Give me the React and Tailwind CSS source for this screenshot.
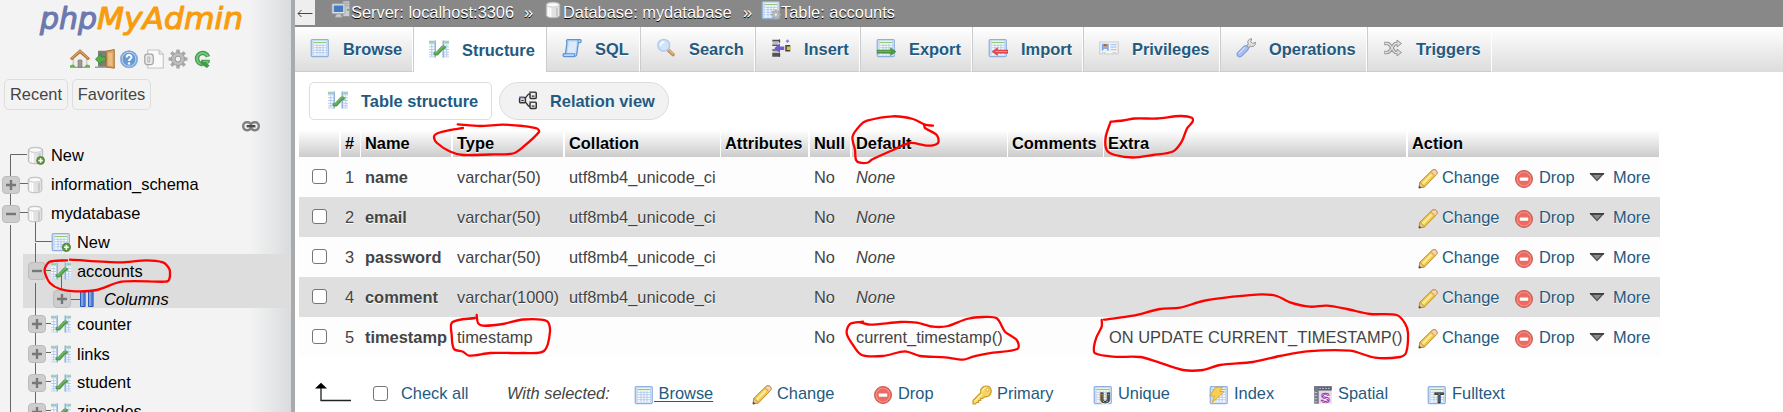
import React from "react";

/* ---------- icons (16-unit grid, drawn at 20px) ---------- */
function Svg({ children, size = 20, className = "" }) {
  return (
    <svg width={size} height={size} viewBox="0 0 16 16" className={"block shrink-0 " + className} fill="none">
      {children}
    </svg>
  );
}

const sheet = (
  <>
    <rect x="1" y="1.2" width="13.6" height="13.6" rx="0.8" fill="#e9f1fb" stroke="#8fb0dc" strokeWidth="1" />
    <rect x="1.8" y="2" width="12" height="12" fill="#bfd5f0" />
    <rect x="3" y="2.4" width="9.8" height="11" fill="#fff" />
    <path d="M3 3.6h9.8" stroke="#8ccb74" strokeWidth="1.1" />
    <path d="M3 5.8h9.8M3 7.8h9.8M3 9.8h9.8M3 11.8h9.8M5.6 5v8.4M8 5v8.4M10.4 5v8.4" stroke="#a9c4e8" strokeWidth="0.7" />
  </>
);

const plusBadge = (
  <>
    <circle cx="12.3" cy="12.2" r="3.3" fill="#5d9a42" stroke="#477d30" strokeWidth="0.7" />
    <path d="M12.3 10.3v3.8M10.4 12.2h3.8" stroke="#fff" strokeWidth="1.3" />
  </>
);

const cylinder = (
  <>
    <path d="M2 3.4c0-1.4 2.6-2.3 6-2.3s6 .9 6 2.3v9.2c0 1.4-2.6 2.3-6 2.3s-6-.9-6-2.3z" fill="#e2e2e2" stroke="#b5b5b5" strokeWidth="0.8" />
    <path d="M4 5.5v8M5.8 6v8.2" stroke="#fff" strokeWidth="1.4" />
    <path d="M11.5 6v7.8" stroke="#c9c9c9" strokeWidth="1.8" />
    <ellipse cx="8" cy="3.4" rx="5.4" ry="1.9" fill="#fafafa" stroke="#c4c4c4" strokeWidth="0.6" />
  </>
);

const BrowseIcon = (p) => <Svg {...p}>{sheet}</Svg>;
const NewTableIcon = (p) => <Svg {...p}>{sheet}{plusBadge}</Svg>;
const DbIcon = (p) => <Svg {...p}>{cylinder}</Svg>;
const NewDbIcon = (p) => <Svg {...p}>{cylinder}{plusBadge}</Svg>;

const StructureIcon = (p) => (
  <Svg {...p}>
    <path d="M0 1.2h5.6v13.6H0z" fill="#c4daf3" />
    <path d="M10.8 1.2H16v13.6h-5.2z" fill="#c4daf3" />
    <path d="M0 2.4h4M12.4 2.4H16" stroke="#8ccb74" strokeWidth="1" />
    <path d="M0 4.4h4.2v9.4H0zM12.4 4.4H16v9.4h-3.6z" fill="#fff" />
    <path d="M0 6.2h4.2M0 8.4h4.2M0 10.6h4.2M0 12.6h4.2M12.4 6.2H16M12.4 8.4H16M12.4 10.6H16M12.4 12.6H16M2.2 4.4v9.4M14.2 4.4v9.4" stroke="#abc6e8" strokeWidth="0.7" />
    <path d="M5 1.2v13.600M11.400 1.2v13.600" stroke="#8fb0dc" strokeWidth="1" />
    <path d="M5 11.600h1.500l4.600-5h1" stroke="#4f9c48" strokeWidth="3" strokeLinecap="round" strokeLinejoin="round" />
    <path d="M5 11.200h1.300l4.600-5h1" stroke="#6fb566" strokeWidth="1.100" strokeLinecap="round" />
  </Svg>
);

const SqlIcon = (p) => (
  <Svg {...p}>
    <path d="M4.5 1.2h10c1 0 1.200 2.200 0 2.400h-1.400L11.800 13c-.2 1.200-1 1.800-2 1.800H1.800c-1.200 0-1.200-2.400 0-2.400h1L4 3.400c-.7-.7-.5-2.200.5-2.200z" fill="#bcd8f7" stroke="#5b93d6" strokeWidth="1" />
    <path d="M5.600 2.800h6.200l-1.200 9H4.500z" fill="#dcebfb" />
    <path d="M2 12.600h8.200l-.5 1.800" stroke="#5b93d6" strokeWidth="0.800" />
    <path d="M13 3.600c-.5-.8-.3-2 .6-2.200" stroke="#5b93d6" strokeWidth="0.800" />
  </Svg>
);

const SearchIcon = (p) => (
  <Svg {...p}>
    <path d="M9.600 9.400l4 3.800" stroke="#c08f5c" strokeWidth="3" strokeLinecap="round" />
    <path d="M9.800 9l3.800 3.600" stroke="#e6bd88" strokeWidth="1" strokeLinecap="round" />
    <circle cx="6.200" cy="5.800" r="4.700" fill="#cfe3fa" stroke="#b0c9ea" strokeWidth="1.100" />
    <path d="M3.600 6c.2-1.800 1.300-2.700 3-2.800" stroke="#fff" strokeWidth="1.300" />
  </Svg>
);

const InsertIcon = (p) => (
  <Svg {...p}>
    <path d="M1 1.400h6v1.400H1zM1 5.200h5v1.200H1zM1 9h5v1.200H1zM1 12h6v3H1z" fill="#555" />
    <path d="M1.200 3.200h4.600v1.600H1.200zM1.200 10.600h4.600V12H1.200z" fill="#bbb" />
    <path d="M6.800 1.200v2.600M6.800 12.200V15" stroke="#444" strokeWidth="1" />
    <path d="M2.600 8.200l4.600-4v2.600h3.400v2.800H7.200v2.600z" fill="#6a5fd0" />
    <path d="M11.400 5.600h4v5.200h-4z" fill="#444" />
    <path d="M12.600 6.800h2.800v2.800h-2.800z" fill="#f2bd1d" />
    <path d="M13.200 1l1.500 1.500-1.500 1.500-1.500-1.500z" fill="#8a7fe0" />
  </Svg>
);

const ExportIcon = (p) => (
  <Svg {...p}>
    {sheet}
    <path d="M1 9.600h10.600V7.800l4.400 3.100-4.400 3.100v-1.800H1z" fill="#4f9a3c" stroke="#3d7f2e" strokeWidth="0.400" />
    <path d="M1.600 10.600H12" stroke="#86c373" strokeWidth="0.600" />
  </Svg>
);

const ImportIcon = (p) => (
  <Svg {...p}>
    {sheet}
    <path d="M16 9.600H7.600V7.800l-4.400 3.100 4.400 3.100v-1.800H16z" fill="#e8484a" stroke="#d03537" strokeWidth="0.400" />
    <path d="M15.400 10.800H6" stroke="#f79a9b" strokeWidth="0.700" />
  </Svg>
);

const PrivilegesIcon = (p) => (
  <Svg {...p}>
    <path d="M.6 3.200h14.800v9.600h-2.200v-1h-1.800v1H4.600v-1H2.800v1H.6z" fill="#f4f4f4" stroke="#cbcbcb" strokeWidth="0.900" />
    <rect x="2.200" y="4.600" width="5.600" height="5.600" fill="#7aaef0" />
    <circle cx="5" cy="6.700" r="1.500" fill="#d8a070" />
    <path d="M3.200 10.200c.2-2 3.400-2 3.600 0z" fill="#fff" />
    <path d="M3.500 6.200c.2-1.600 2.800-1.600 3 0z" fill="#8a5a30" />
    <path d="M9.200 5.200h4.800M9.200 7.200h4.800M9.200 9.200h4.800" stroke="#a9c9f0" strokeWidth="1" />
  </Svg>
);

const WrenchIcon = (p) => (
  <Svg {...p}>
    <path d="M8 8.400l3.400-3.400" stroke="#a2a2a2" strokeWidth="3.200" />
    <path d="M9.400 4.200c-.3-2 .9-3.600 3.200-3.600L11.800 3l1.600 1.400 2.200-1c.3 2.300-1.400 3.700-3.400 3.400z" fill="#e3e3e3" stroke="#979797" strokeWidth="0.800" />
    <path d="M8.600 7.800L11.800 4.600" stroke="#dedede" strokeWidth="1.600" />
    <path d="M3 13l4.800-4.800" stroke="#7899dc" strokeWidth="5" strokeLinecap="round" />
    <path d="M3 13l4.800-4.800" stroke="#a6bff2" strokeWidth="3.600" strokeLinecap="round" />
    <path d="M2.600 12l4.200-4.200" stroke="#cddcfb" strokeWidth="1" strokeLinecap="round" />
  </Svg>
);

const TriggersIcon = (p) => (
  <Svg {...p}>
    <path d="M1 4.400h2.600c3 0 4 7.200 7 7.200h1.600M1 11.600h2.600c3 0 4-7.200 7-7.200h1.600" stroke="#989898" strokeWidth="2.900" />
    <path d="M11.200 1.600l3.600 2.800-3.600 2.800zM11.200 8.800l3.600 2.800-3.600 2.800z" fill="#d8d8d8" stroke="#989898" strokeWidth="0.800" />
    <path d="M1.600 4.400h2c3 0 4 7.200 7 7.200h2M1.600 11.600h2c3 0 4-7.200 7-7.200h2" stroke="#dedede" strokeWidth="1.100" />
  </Svg>
);

const RelationIcon = (p) => (
  <Svg {...p}>
    <path d="M5 7.400l3.400-4.200h2M5 8.400l3.400 4.400h2" stroke="#333" strokeWidth="1" />
    <rect x="1.300" y="6" width="4.600" height="4.200" rx="0.800" fill="#eee" stroke="#333" strokeWidth="1.200" />
    <path d="M2.600 8.400h2" stroke="#333" />
    <rect x="9.600" y="1.800" width="5" height="5" rx="0.800" fill="#eee" stroke="#333" strokeWidth="1.200" />
    <rect x="9.600" y="9.800" width="5" height="5" rx="0.800" fill="#eee" stroke="#333" strokeWidth="1.200" />
    <path d="M11 4.800h2.200M11 12.800h2.200" stroke="#333" />
    <path d="M8.800 1.300h5M8.800 9.200h5M.8 5.400h4" stroke="#9a93d0" strokeWidth="1" />
  </Svg>
);

const PencilIcon = (p) => (
  <Svg {...p}>
    <path d="M.8 15.200l.7-4.600L11.200 1.100c1-.9 2.500-.8 3.400.1.9.9 1 2.300.1 3.300L5.200 14.300z" fill="#f0c84a" stroke="#bd8a34" strokeWidth="0.800" />
    <path d="M3.800 11.800L11 4.400" stroke="#fceb94" strokeWidth="2" />
    <path d="M10.400 2.100l1-.9c1-.8 2.300-.7 3.100.1.900.9 1 2.100.2 3.100l-1 1z" fill="#f5d5b4" stroke="#cb9458" strokeWidth="0.700" />
    <path d="M.8 15.200l.7-4.600 3.700 3.700z" fill="#e6c894" stroke="#b08340" strokeWidth="0.500" />
    <path d="M.6 15.400l.4-2.300 1.900 1.900z" fill="#6b4a22" />
  </Svg>
);

const DropIcon = (p) => (
  <Svg {...p}>
    <circle cx="8" cy="8" r="6.800" fill="#e2564e" stroke="#cf5f58" strokeWidth="0.800" />
    <circle cx="8" cy="8" r="5.600" fill="#ec6a5f" stroke="#f2968d" strokeWidth="0.900" />
    <rect x="4.600" y="6.800" width="6.800" height="2.500" rx="0.500" fill="#fff" />
  </Svg>
);

const KeyIcon = (p) => (
  <Svg {...p}>
    <path d="M.8 15.200v-2.800l6-6C6.200 3.600 8.400.8 11.200.8c2.600 0 4.200 1.800 4.200 4.200 0 2.800-2.500 5-5.400 4.400l-1.400 1.400H7v1.600H5.300v1.600H3.800l-1 1.200z" fill="#f6d55c" stroke="#c9962c" strokeWidth="0.900" />
    <path d="M2 13.200l6-6M8.600 5c.2-1.600 1.400-2.600 3-2.700" stroke="#fdf1ae" strokeWidth="1" />
    <circle cx="12.300" cy="3.900" r="1.200" fill="#fff" stroke="#c9962c" strokeWidth="0.600" />
  </Svg>
);

const LetterSheet = ({ letter }) => (
  <Svg>
    {sheet}
    <text x="9.800" y="14.400" textAnchor="middle" fontFamily="Liberation Sans, sans-serif" fontWeight="bold" fontSize="11.500" fill="#1c1c1c" stroke="#1c1c1c" strokeWidth="0.700">
      {letter}
    </text>
  </Svg>
);

const IndexIcon = (p) => (
  <Svg {...p}>
    {sheet}
    <path d="M5.200 1.800h5.600L8.800 5.200h3.400L2.600 14l1.800-5.200H.6z" fill="#f7cf52" stroke="#d9a22c" strokeWidth="0.700" />
  </Svg>
);

const SpatialIcon = (p) => (
  <Svg {...p}>
    <rect x="1" y="1" width="14" height="14" fill="#dcdce4" />
    <path d="M1 1h14v3.400H1z" fill="#5a5a70" />
    <path d="M1 1h3.600v14H1z" fill="#77778a" />
    <path d="M1.600 6h2.400M1.600 8.500h2.400M1.600 11h2.400M1.600 13.400h2.400M5 2.700h9" stroke="#c9c9d8" strokeWidth="0.800" strokeDasharray="1.500 .8" />
    <text x="9.900" y="14" textAnchor="middle" fontFamily="Liberation Sans, sans-serif" fontWeight="bold" fontSize="11" fill="#a01fa8" stroke="#a01fa8" strokeWidth="0.500">S</text>
  </Svg>
);

const MoreIcon = () => (
  <Svg>
    <path d="M3.200 5.600h9.600L8 10.800z" fill="#8a8a8a" stroke="#555" strokeWidth="1.100" />
    <path d="M2.400 5.500h11.200" stroke="#333" strokeWidth="1.100" />
  </Svg>
);

const HomeIcon = () => (
  <Svg>
    <path d="M0 13.200h16V15H0z" fill="#5da74a" />
    <path d="M2.600 7.600L8 3l5.400 4.600v6.800H2.600z" fill="#f1efe9" stroke="#a9a59a" strokeWidth="0.600" />
    <path d="M6.400 8.800h3.200v5.800H6.400z" fill="#9a9a9a" stroke="#777" strokeWidth="0.500" />
    <path d="M.8 8.200L8 1.800l7.200 6.400" stroke="#a8672a" strokeWidth="2.400" />
    <path d="M1.200 7.600L8 1.600l6.800 6" stroke="#d9a063" strokeWidth="1.200" />
    <path d="M0 14.400c.6-2.600 3.600-2.600 4.200 0zM11.800 14.400c.6-2.600 3.600-2.600 4.200 0z" fill="#69b553" />
  </Svg>
);

const ExitIcon = () => (
  <Svg>
    <path d="M2.400 1.400h8v13.200h-8z" fill="#7d7d7d" />
    <path d="M0 14h16v1.200H0z" fill="#a1a1a1" />
    <path d="M9 1.800L15.400.4v15L9 14.200z" fill="#dba263" stroke="#a8702f" strokeWidth="0.800" />
    <path d="M10.600 3.400l3.400-.6v10.800l-3.400-.6z" fill="#e9bd85" />
    <path d="M.3 8.200l4.500-4.400v2.400h3.600v4H4.800v2.400z" fill="#55ad4b" stroke="#3b8433" strokeWidth="0.600" />
  </Svg>
);

const HelpIcon = () => (
  <Svg>
    <circle cx="8" cy="8.200" r="6.800" fill="#5b8ecb" stroke="#8fb2dd" strokeWidth="0.900" />
    <circle cx="8" cy="8.200" r="5.600" fill="#6a9ad4" stroke="#c8dcf3" strokeWidth="0.800" />
    <path d="M6.100 6.700c0-2.600 3.900-2.400 3.900-.2 0 1.500-2 1.500-2 3.100" stroke="#fff" strokeWidth="1.500" />
    <circle cx="8" cy="11.500" r="0.950" fill="#fff" />
  </Svg>
);

const DocsIcon = () => (
  <Svg>
    <path d="M3 .8h9l3.400 3.400v11H3z" fill="#fafafa" stroke="#c3c3c3" strokeWidth="0.900" />
    <path d="M12 .8v3.400h3.400" fill="#e6e6e6" stroke="#c3c3c3" strokeWidth="0.800" />
    <rect x="0.600" y="4" width="6.800" height="8.400" rx="2" fill="#e9e9e9" stroke="#a5a5a5" strokeWidth="1" />
    <path d="M3 6.400v4h1.600v-4z" stroke="#b5b5b5" strokeWidth="0.800" />
  </Svg>
);

const teeth = [0, 45, 90, 135, 180, 225, 270, 315];
const gear = (
  <>
    {teeth.map((a) => (
      <rect key={a} x="6.600" y="0.400" width="2.800" height="4" rx="0.500" fill="#a9a9a9" transform={`rotate(${a} 8 8)`} />
    ))}
    <circle cx="8" cy="8" r="5.200" fill="#bdbdbd" stroke="#9d9d9d" strokeWidth="0.800" />
    <circle cx="8" cy="8" r="2.300" fill="#f3f3f3" stroke="#999" strokeWidth="0.800" />
  </>
);
const GearIcon = () => <Svg>{gear}</Svg>;

const ReloadIcon = () => (
  <Svg>
    <path d="M12 6.200A4.500 4.500 0 1 0 7.600 12.200" stroke="#3f9a49" strokeWidth="3.600" />
    <path d="M11.900 6A4.500 4.500 0 1 0 7.600 12.200" stroke="#78c77c" strokeWidth="1.600" />
    <path d="M6.600 8.600h6.800v2l-1.600 1.400 1.400 1.200-2 2-5-3z" fill="#3f9a49" />
    <path d="M8 9.800h4l-1 1.800" stroke="#78c77c" strokeWidth="1" />
  </Svg>
);

const ServerIcon = () => (
  <Svg>
    <path d="M9.500.8h5.500v12.400H9.500z" fill="#c9cdd0" stroke="#8e9499" strokeWidth="0.700" />
    <path d="M10.500 2.600h3.600M10.500 4.600h3.600" stroke="#8e9499" strokeWidth="0.700" />
    <circle cx="13.500" cy="7.800" r="0.900" fill="#58b548" />
    <rect x="0.800" y="3" width="10.400" height="8" rx="0.600" fill="#dfe3e6" stroke="#9aa0a5" strokeWidth="0.700" />
    <rect x="2.200" y="4.400" width="7.600" height="5.200" fill="#4479c4" />
    <path d="M4.600 11.200h3l1.400 2.600H3.200z" fill="#c9cdd0" stroke="#9aa0a5" strokeWidth="0.500" />
  </Svg>
);

const TableGearIcon = () => (
  <Svg>
    {sheet}
    <g transform="translate(7.600 7.400) scale(.54)">{gear}</g>
  </Svg>
);

/* ---------- navigation panel ---------- */
function Expander({ open }) {
  return (
    <span className="flex h-[18px] w-[18px] shrink-0 items-center justify-center rounded-[4px] border border-[#bcbcbc] bg-[#cdcdcd]">
      <svg width="10" height="10" viewBox="0 0 10 10" className="block">
        <path d={open ? "M0 5h10" : "M0 5h10M5 0v10"} stroke="#777" strokeWidth="2.400" />
      </svg>
    </span>
  );
}

function Root({ open, isNew, label }) {
  return (
    <div className="flex h-[29px] items-center pl-[2px]">
      <span className="w-[24px] shrink-0">{!isNew && <Expander open={open} />}</span>
      {isNew ? <NewDbIcon size={19} /> : <DbIcon size={18} />}
      <span className={"pb-[2px] " + (isNew ? "pl-[6px]" : "pl-[7px]")}>{label}</span>
    </div>
  );
}

function TableNode({ label, open, height }) {
  return (
    <div className={"flex items-center pl-[28px] " + height}>
      <Expander open={open} />
      <StructureIcon className="ml-[5px]" />
      <span className="pb-[1px] pl-[6px]">{label}</span>
    </div>
  );
}

function Sidebar() {
  return (
    <aside className="relative h-[412px] w-[295px] shrink-0 overflow-hidden border-r-[4px] border-[#aaa] bg-[linear-gradient(to_right,#f3f3f3_0px,#f3f3f3_250px,#d9dcde_291px)]">
      <div className="flex h-[46px] pl-[36px]">
        <svg width="212" height="46" viewBox="0 0 212 46" className="block">
          <g fontFamily="DejaVu Sans, sans-serif" fontStyle="italic" fontSize="29.500" strokeWidth="1.100" strokeLinejoin="round">
            <text x="4" y="29" fill="#6c78af" stroke="#6c78af" textLength="57" lengthAdjust="spacingAndGlyphs">php</text>
            <text x="61" y="29" fill="#f89c0e" stroke="#f89c0e" textLength="146" lengthAdjust="spacingAndGlyphs">MyAdmin</text>
          </g>
        </svg>
      </div>
      <div className="flex h-[33px] gap-[4.600px] pl-[70px] pt-[3px]">
        <HomeIcon />
        <ExitIcon />
        <HelpIcon />
        <DocsIcon />
        <GearIcon />
        <ReloadIcon />
      </div>
      <div className="flex gap-[4px] pl-[4px] text-[#444]">
        <span className="flex h-[31px] w-[64px] items-center justify-center rounded-[5px] border border-[#ddd] pb-[2px]">Recent</span>
        <span className="flex h-[31px] w-[79px] items-center justify-center rounded-[5px] border border-[#ddd] pb-[2px]">Favorites</span>
      </div>
      <div className="flex h-[31px] justify-end pr-[31px] pt-[11px]">
        <svg width="18" height="11" viewBox="0 0 18 11" className="block" fill="none">
          <rect x="1.200" y="1.200" width="8" height="8" rx="3.600" stroke="#808080" strokeWidth="2.400" />
          <rect x="8.800" y="1.200" width="8" height="8" rx="3.600" stroke="#808080" strokeWidth="2.400" />
          <path d="M4.600 5.200h8.800" stroke="#4a4a4a" strokeWidth="2.400" />
        </svg>
      </div>
      <div className="relative text-black">
        <div className="absolute left-[23px] right-0 top-[113px] h-[54px] bg-[#dddddd]" />
        <svg className="absolute left-0 top-0" width="100" height="271" viewBox="0 141 100 271" fill="none" stroke="#666" strokeWidth="1">
          <path d="M27 154.500H10.500V220M10.500 225V412M20 183.500h8M20 212.500h8M35.500 222V241.500H52M35.500 243V262M35.500 283V412M46 270.500h6M61.500 275V290M71 299.500h9M46 323.500h6M46 352.500h6M46 381.500h6M46 410.500h6" />
        </svg>
        <div className="relative">
          <Root isNew label="New" />
          <Root label="information_schema" />
          <Root open label="mydatabase" />
          <div className="flex h-[26px] items-center pl-[51px] pt-[1px]">
            <NewTableIcon />
            <span className="pl-[6px]">New</span>
          </div>
          <TableNode open label="accounts" height="h-[34px]" />
          <div className="flex h-[20px] items-center pl-[53px] pt-[2px]">
            <Expander />
            <svg width="14" height="16" viewBox="0 0 14 16" className="ml-[9px] block shrink-0">
              <path d="M.5.500h4.600v15H.5zM8.500.500h4.600v15H8.500z" fill="#4f82d8" stroke="#2f5cba" />
              <path d="M2 1v14M10 1v14" stroke="#9bbcf2" strokeWidth="1.200" />
            </svg>
            <span className="pb-[1px] pl-[10px] italic">Columns</span>
          </div>
          <TableNode label="counter" height="h-[32px]" />
          <TableNode label="links" height="h-[28px]" />
          <TableNode label="student" height="h-[29px]" />
          <TableNode label="zipcodes" height="h-[29px]" />
        </div>
      </div>
    </aside>
  );
}

/* ---------- main panel ---------- */
const tabs = [
  { label: "Browse", Icon: BrowseIcon, box: "w-[118px]" },
  { label: "Structure", Icon: StructureIcon, box: "w-[133px]", active: true },
  { label: "SQL", Icon: SqlIcon, box: "w-[94px]" },
  { label: "Search", Icon: SearchIcon, box: "w-[115px]" },
  { label: "Insert", Icon: InsertIcon, box: "w-[105px]" },
  { label: "Export", Icon: ExportIcon, box: "w-[112px]" },
  { label: "Import", Icon: ImportIcon, box: "w-[111px]" },
  { label: "Privileges", Icon: PrivilegesIcon, box: "w-[137px]" },
  { label: "Operations", Icon: WrenchIcon, box: "w-[147px]" },
  { label: "Triggers", Icon: TriggersIcon, box: "w-[125px]" },
];

const grid = "grid grid-cols-[42px_20px_92px_112px_156px_89px_42px_156px_96px_304px_252px]";

const headers = [
  { text: "", edge: "border-r-2" },
  { text: "#", edge: "border-r" },
  { text: "Name", edge: "border-r-2" },
  { text: "Type", edge: "border-r-2" },
  { text: "Collation", edge: "border-r" },
  { text: "Attributes", edge: "border-r-2" },
  { text: "Null", edge: "border-r-2" },
  { text: "Default", edge: "border-r" },
  { text: "Comments", edge: "border-r" },
  { text: "Extra", edge: "border-r-2" },
  { text: "Action", edge: "border-r" },
];

const rows = [
  { n: 1, name: "name", type: "varchar(50)", coll: "utf8mb4_unicode_ci", def: "None" },
  { n: 2, name: "email", type: "varchar(50)", coll: "utf8mb4_unicode_ci", def: "None" },
  { n: 3, name: "password", type: "varchar(50)", coll: "utf8mb4_unicode_ci", def: "None" },
  { n: 4, name: "comment", type: "varchar(1000)", coll: "utf8mb4_unicode_ci", def: "None" },
  { n: 5, name: "timestamp", type: "timestamp", coll: "", def: "current_timestamp()", extra: "ON UPDATE CURRENT_TIMESTAMP()" },
];

function Check() {
  return <span className="block h-[15px] w-[15px] shrink-0 rounded-[3px] border-[1.300px] border-[#767676] bg-white" />;
}

function Row({ row }) {
  return (
    <div className={grid + " h-[40px] items-center text-[#444] " + (row.n % 2 ? "bg-[#fdfdfd]" : "bg-[#dfdfdf]")}>
      <span className="pb-[1px] pl-[13px]"><Check /></span>
      <span className="pl-[4px]">{row.n}</span>
      <span className="pl-[4px] font-bold">{row.name}</span>
      <span className="pl-[4px]">{row.type}</span>
      <span className="pl-[4px]">{row.coll}</span>
      <span />
      <span className="pl-[4px]">No</span>
      <span className={"pl-[4px] " + (row.def === "None" ? "italic" : "")}>{row.def}</span>
      <span />
      <span className="pl-[5px]">{row.extra}</span>
      <span className="flex items-center pl-[10px] text-[#235a81]">
        <PencilIcon className="mt-[3px]" />
        <span className="w-[76px] pl-[4px]">Change</span>
        <DropIcon className="mt-[3px]" />
        <span className="w-[53px] pl-[5px]">Drop</span>
        <MoreIcon />
        <span className="pl-[6px]">More</span>
      </span>
    </div>
  );
}

const bulk = [
  { label: "Change", icon: <PencilIcon />, box: "w-[121px]" },
  { label: "Drop", icon: <DropIcon />, box: "w-[99px]" },
  { label: "Primary", icon: <KeyIcon />, box: "w-[121px]" },
  { label: "Unique", icon: <LetterSheet letter="U" />, box: "w-[116px]" },
  { label: "Index", icon: <IndexIcon />, box: "w-[104px]" },
  { label: "Spatial", icon: <SpatialIcon />, box: "w-[114px]" },
  { label: "Fulltext", icon: <LetterSheet letter="T" />, box: "w-[100px]" },
];

function Main() {
  return (
    <main className="h-[412px] min-w-0 flex-1 overflow-hidden bg-white [text-shadow:0_1px_0_#fff]">
      <div className="flex h-[27px] bg-[#888] text-white [text-shadow:0_1px_0_#000]">
        <span className="flex h-[25px] w-[20px] items-center justify-center bg-[#eee]">
          <svg width="16" height="9" viewBox="0 0 16 9" className="mt-[2px] block" fill="none" stroke="#444">
            <path d="M15.500 4.500H1M4.500 1L1 4.500 4.500 8" />
          </svg>
        </span>
        <div className="flex h-[24px] items-center pl-[16px]">
          <span className="-mt-[4px]"><ServerIcon /></span>
          <span className="w-[173px]">Server: localhost:3306</span>
          <span className="w-[20px]">»</span>
          <span className="-mt-[4px]"><DbIcon size={18} /></span>
          <span className="w-[181px] pl-[1px]">Database: mydatabase</span>
          <span className="w-[18px]">»</span>
          <span className="-mt-[4px]"><TableGearIcon /></span>
          <span>Table: accounts</span>
        </div>
      </div>
      <nav className="flex h-[45px] bg-gradient-to-b from-white to-[#dcdcdc] font-bold text-[#235a81]">
        {tabs.map(({ label, Icon, box, active }, i) => (
          <span
            key={label}
            className={
              "flex shrink-0 items-center border-r border-r-white pl-[15px] " + box +
              (i > 0 ? " border-l border-l-[#ccc]" : "") +
              (active ? " bg-white" : " border-b border-b-[#ccc]")
            }
          >
            <Icon className="-mt-[2px]" />
            <span className="pl-[13px]">{label}</span>
          </span>
        ))}
      </nav>
      <div className="flex gap-[7px] pl-[14px] pt-[10px] font-bold text-[#235a81]">
        <span className="flex h-[38px] w-[183px] items-center rounded-[5px] border border-[#ddd] pl-[18px]">
          <StructureIcon className="-mt-[2px]" />
          <span className="pb-[1px] pl-[13px]">Table structure</span>
        </span>
        <span className="flex h-[38px] w-[170px] items-center rounded-full border border-[#ddd] bg-[#f2f2f2] pl-[18px]">
          <RelationIcon className="-mt-[2px]" />
          <span className="pb-[1px] pl-[12px]">Relation view</span>
        </span>
      </div>
      <div className="ml-[4px] mt-[10px] w-[1361px]">
        <div className={grid + " h-[27px] font-bold text-black"}>
          {headers.map((h, i) => (
            <span key={i} className={"flex items-center border-white bg-gradient-to-b from-white to-[#ccc] bg-clip-padding pb-[2px] pl-[4px] " + h.edge}>
              {h.text}
            </span>
          ))}
        </div>
        {rows.map((r) => <Row key={r.n} row={r} />)}
      </div>
      <div className="flex h-[55px] items-center pl-[20px] pt-[17px] text-[#235a81]">
        <svg width="38" height="22" viewBox="0 0 38 22" className="block shrink-0">
          <path d="M6 5v13.500h30" fill="none" stroke="#222" strokeWidth="1.300" />
          <path d="M0 6.500L6 .8l6 5.700z" fill="#000" />
        </svg>
        <span className="pl-[20px]"><Check /></span>
        <span className="w-[119px] shrink-0 pl-[13px]">Check all</span>
        <span className="w-[127px] shrink-0 italic text-[#444]">With selected:</span>
        <BrowseIcon className="mt-[3px]" />
        <span className="w-[98px] shrink-0"><span className="underline underline-offset-2">&nbsp;Browse</span></span>
        {bulk.map((b) => (
          <span key={b.label} className={"flex shrink-0 items-center " + b.box}>
            <span className="pt-[3px]">{b.icon}</span>
            <span className="pl-[5px]">{b.label}</span>
          </span>
        ))}
      </div>
    </main>
  );
}

/* ---------- freehand pen marks over the page ---------- */
const marks = [
  [463, 128, 450, 130, 437, 133.5, 434, 137, 437, 143, 450, 151.5, 463, 155, 490, 154.5, 513, 153.5, 523, 147, 539, 132, 537, 128.5, 523, 126, 503, 124.7, 480, 126, 457.7, 124.3],
  [933, 125.7, 925, 124.7, 913, 119, 893, 116.3, 867, 120.7, 860, 125.5, 852.5, 136.7, 855, 150, 856, 160, 860, 162.7, 868, 162.5, 872, 159.5, 893, 150, 910, 143, 928, 145.7, 938, 143, 936.7, 135, 925, 128, 924, 124.7],
  [1110.7, 121.7, 1123, 120.5, 1135, 118.5, 1157, 118.5, 1180, 116, 1192, 117.7, 1192.7, 121.5, 1187, 128.5, 1181.7, 141.7, 1173, 151.5, 1153, 155, 1133, 157.5, 1115, 155, 1106.7, 150, 1105.7, 137, 1110.7, 121.7],
  [476.7, 315, 478, 323, 483, 325.7, 503, 324, 523, 319.5, 546.7, 321, 550, 331.7, 544, 351, 523, 353, 490, 353, 469, 355.7, 463, 351.7, 454, 349, 451.7, 335, 452.3, 322.3, 475, 318],
  [863, 321.7, 850, 324, 846.7, 333.3, 853, 345, 861.7, 355, 883, 356, 905, 351.3, 920, 356, 945, 357.3, 963, 359.7, 973, 356.7, 993, 352.7, 1017.7, 348.7, 1016.7, 340, 1005, 331.7, 996.7, 318.3, 983, 317, 966.7, 319, 948, 326, 933, 326.7, 916.7, 322.7, 900, 322, 870, 324.7, 860, 322.3],
  [1104, 319.7, 1133, 315.7, 1160, 309, 1180, 307.7, 1203, 301, 1233, 296.7, 1261.7, 294.3, 1276.7, 296, 1290, 302.3, 1310, 306.7, 1326.7, 305.7, 1346.7, 309, 1370, 314, 1396.7, 315, 1405, 323.3, 1408, 333, 1406, 353, 1400, 357, 1375, 357.7, 1350, 350.7, 1306.7, 351.3, 1280, 356, 1253, 362, 1220, 365, 1203, 370, 1183, 370, 1156.7, 361.7, 1140, 357, 1113, 356.7, 1095, 353.3, 1094, 346.7, 1096.7, 336.7, 1101.7, 326.7, 1101.7, 320],
  [67, 260.3, 50, 261.7, 45, 268, 45, 273, 50, 283, 60, 289, 75, 291.3, 96.7, 290, 121.7, 281.7, 165, 281.7, 169, 280, 170, 271.7, 168, 266.7, 163, 262.3, 146.7, 260.3, 120, 262.3, 70, 259.7],
];

// Joins the sampled points with gently rounded cubic segments.
function smooth(p) {
  const n = p.length / 2;
  const at = (i) => {
    const k = Math.max(0, Math.min(n - 1, i));
    return [p[2 * k], p[2 * k + 1]];
  };
  let d = `M${p[0]} ${p[1]}`;
  for (let i = 0; i < n - 1; i++) {
    const [a, b, c, e] = [at(i - 1), at(i), at(i + 1), at(i + 2)];
    const t = Math.hypot(c[0] - b[0], c[1] - b[1]);
    const bend = (u, v) => {
      const len = Math.hypot(v[0] - u[0], v[1] - u[1]) || 1;
      return [((v[0] - u[0]) / len) * t * 0.28, ((v[1] - u[1]) / len) * t * 0.28];
    };
    const s = bend(a, c);
    const f = bend(b, e);
    d += `C${b[0] + s[0]} ${b[1] + s[1]} ${c[0] - f[0]} ${c[1] - f[1]} ${c[0]} ${c[1]}`;
  }
  return d;
}

export default function App() {
  return (
    <div className="relative flex h-[412px] w-[1783px] overflow-hidden whitespace-nowrap bg-white font-['Liberation_Sans',Arial,sans-serif] text-[16.4px] leading-[20px]">
      <Sidebar />
      <Main />
      <svg className="pointer-events-none absolute inset-0" width="1783" height="412" viewBox="0 0 1783 412" fill="none" stroke="#f00" strokeWidth="2.3" strokeLinecap="round" strokeLinejoin="round">
        {marks.map((m, i) => <path key={i} d={smooth(m)} />)}
      </svg>
    </div>
  );
}
